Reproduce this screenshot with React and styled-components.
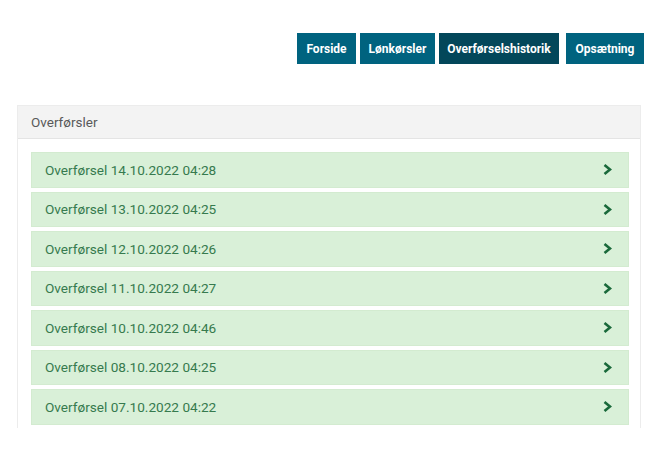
import React from "react";
import styled, { createGlobalStyle } from "styled-components";

const Global = createGlobalStyle`
  html, body { margin: 0; padding: 0; background: #fff; }
  body { font-family: Roboto, "Liberation Sans", Arial, sans-serif; }
`;

const Page = styled.div`
  display: flex;
  flex-direction: column;
  padding: 33px 17px 0 17px;
`;

const Nav = styled.nav`
  display: flex;
  justify-content: flex-end;
`;

const NavButton = styled.button`
  height: 31px;
  width: ${(p) => p.$w}px;
  padding: 0;
  margin-left: ${(p) => p.$gap}px;
  border: none;
  background: ${(p) => (p.$active ? "#03475a" : "#00637f")};
  color: #fff;
  font-family: Roboto, "Liberation Sans", Arial, sans-serif;
  font-weight: 700;
  font-size: 12px;
  text-align: center;
  cursor: pointer;
`;

const Panel = styled.section`
  margin: 41px 3px 0 0;
  height: 323px;
  overflow: hidden;
  border: 1px solid #ececec;
  border-bottom: none;
  box-sizing: border-box;
`;

const PanelHeader = styled.div`
  height: 33px;
  display: flex;
  align-items: center;
  padding-left: 13px;
  background: #f3f3f3;
  border-bottom: 1px solid #e4e4e4;
  box-sizing: border-box;
  color: #595959;
  font-size: 13.5px;
`;

const PanelBody = styled.div`
  display: flex;
  flex-direction: column;
  gap: 4px;
  padding: 13px 11px 0 13px;
`;

const Row = styled.a`
  display: flex;
  align-items: center;
  justify-content: space-between;
  height: 35.5px;
  box-sizing: border-box;
  padding: 0 16px 0 13px;
  background: #d9f0d8;
  border: 1px solid #d3ebd0;
  color: #367a4e;
  font-size: 13.6px;
  text-decoration: none;
  cursor: pointer;
`;

const Chevron = styled.svg`
  width: 9px;
  height: 11px;
  color: #19693a;
`;

const items = [
  "14.10.2022 04:28",
  "13.10.2022 04:25",
  "12.10.2022 04:26",
  "11.10.2022 04:27",
  "10.10.2022 04:46",
  "08.10.2022 04:25",
  "07.10.2022 04:22",
];

export default function App() {
  return (
    <>
      <Global />
      <Page>
        <Nav>
          <NavButton $gap={0} $w={59}>Forside</NavButton>
          <NavButton $gap={4} $w={75}>Lønkørsler</NavButton>
          <NavButton $gap={4} $w={120} $active>Overførselshistorik</NavButton>
          <NavButton $gap={7} $w={78}>Opsætning</NavButton>
        </Nav>
        <Panel>
          <PanelHeader>Overførsler</PanelHeader>
          <PanelBody>
            {items.map((d) => (
              <Row key={d}>
                <span>Overførsel {d}</span>
                <Chevron viewBox="0 0 9 11">
                  <path d="M1.5 1 L7 5.5 L1.5 10" fill="none" stroke="currentColor" strokeWidth="2.6" strokeLinejoin="miter" />
                </Chevron>
              </Row>
            ))}
          </PanelBody>
        </Panel>
      </Page>
    </>
  );
}
